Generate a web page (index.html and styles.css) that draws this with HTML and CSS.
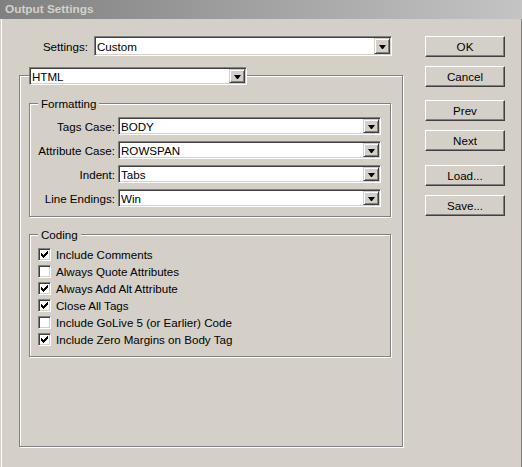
FILE: index.html
```html
<!DOCTYPE html>
<html>
<head>
<meta charset="utf-8">
<title>Output Settings</title>
<link rel="stylesheet" href="styles.css">
</head>
<body>
<div class="window">
  <div class="titlebar">Output Settings</div>
  <div class="content">
    <div class="main">
      <div class="settings-row">
        <span class="settings-label">Settings:</span>
        <div class="select select-settings"><span class="value">Custom</span><span class="drop"></span></div>
      </div>
      <div class="group outer">
        <div class="group-head">
          <div class="select select-html"><span class="value">HTML</span><span class="drop"></span></div>
        </div>
        <div class="group inner formatting">
          <div class="legend">Formatting</div>
          <div class="form-grid">
            <span class="field-label">Tags Case:</span>
            <div class="select"><span class="value">BODY</span><span class="drop"></span></div>
            <span class="field-label">Attribute Case:</span>
            <div class="select"><span class="value">ROWSPAN</span><span class="drop"></span></div>
            <span class="field-label">Indent:</span>
            <div class="select"><span class="value">Tabs</span><span class="drop"></span></div>
            <span class="field-label">Line Endings:</span>
            <div class="select"><span class="value">Win</span><span class="drop"></span></div>
          </div>
        </div>
        <div class="group inner coding">
          <div class="legend">Coding</div>
          <div class="check-list">
            <div class="check-row"><span class="checkbox"><svg viewBox="0 0 7 7" width="7" height="7"><path d="M6 0h1v1h-1zM5 1h2v1h-2zM0 2h1v1h-1zM4 2h3v1h-3zM0 3h2v1h-2zM3 3h3v1h-3zM0 4h5v1h-5zM1 5h3v1h-3zM2 6h1v1h-1z"/></svg></span><span>Include Comments</span></div>
            <div class="check-row"><span class="checkbox"></span><span>Always Quote Attributes</span></div>
            <div class="check-row"><span class="checkbox"><svg viewBox="0 0 7 7" width="7" height="7"><path d="M6 0h1v1h-1zM5 1h2v1h-2zM0 2h1v1h-1zM4 2h3v1h-3zM0 3h2v1h-2zM3 3h3v1h-3zM0 4h5v1h-5zM1 5h3v1h-3zM2 6h1v1h-1z"/></svg></span><span>Always Add Alt Attribute</span></div>
            <div class="check-row"><span class="checkbox"><svg viewBox="0 0 7 7" width="7" height="7"><path d="M6 0h1v1h-1zM5 1h2v1h-2zM0 2h1v1h-1zM4 2h3v1h-3zM0 3h2v1h-2zM3 3h3v1h-3zM0 4h5v1h-5zM1 5h3v1h-3zM2 6h1v1h-1z"/></svg></span><span>Close All Tags</span></div>
            <div class="check-row"><span class="checkbox"></span><span>Include GoLive 5 (or Earlier) Code</span></div>
            <div class="check-row"><span class="checkbox"><svg viewBox="0 0 7 7" width="7" height="7"><path d="M6 0h1v1h-1zM5 1h2v1h-2zM0 2h1v1h-1zM4 2h3v1h-3zM0 3h2v1h-2zM3 3h3v1h-3zM0 4h5v1h-5zM1 5h3v1h-3zM2 6h1v1h-1z"/></svg></span><span>Include Zero Margins on Body Tag</span></div>
          </div>
        </div>
      </div>
    </div>
    <div class="buttons">
      <div class="button b-ok">OK</div>
      <div class="button b-cancel">Cancel</div>
      <div class="button b-prev">Prev</div>
      <div class="button b-next">Next</div>
      <div class="button b-load">Load...</div>
      <div class="button b-save">Save...</div>
    </div>
  </div>
</div>
</body>
</html>
```

FILE: styles.css
```css
html, body {
  margin: 0;
  padding: 0;
}

body {
  width: 522px;
  height: 467px;
  overflow: hidden;
  background: #d4d0c8;
  font-family: "Liberation Sans", Arial, sans-serif;
  font-size: 11.6px;
  color: #000;
}

.window {
  width: 522px;
  height: 467px;
  box-sizing: border-box;
  background: #d4d0c8;
  box-shadow: inset 1px 0 #d4d0c8, inset 2px 0 #ffffff, inset -1px 0 #808080;
}

.titlebar {
  height: 19px;
  line-height: 19px;
  padding-left: 5px;
  background: linear-gradient(to right, #808080, #c4c4c4);
  color: #d4d0c8;
  font-weight: bold;
  font-size: 11.8px;
}

.content {
  display: flex;
  padding: 17px 0 0 19px;
}

.main {
  width: 384px;
  display: flex;
  flex-direction: column;
}

.settings-row {
  display: flex;
  align-items: center;
  height: 20px;
}

.settings-label {
  width: 69px;
  margin-right: 6px;
  text-align: right;
}

.select {
  box-sizing: border-box;
  height: 18px;
  padding: 1px 1px 1px 2px;
  background: #fff;
  border: 1px solid;
  border-color: #808080 #fff #fff #808080;
  box-shadow: inset 1px 1px #404040, inset -1px -1px #d4d0c8;
  display: flex;
  align-items: stretch;
}

.select .value {
  flex: 1;
  display: flex;
  align-items: center;
  white-space: nowrap;
}

.select .drop {
  box-sizing: border-box;
  width: 16px;
  background: #d4d0c8;
  border: 1px solid;
  border-color: #d4d0c8 #404040 #404040 #d4d0c8;
  box-shadow: inset 1px 1px #fff, inset -1px -1px #808080;
  display: flex;
  align-items: center;
  justify-content: center;
}

.select .drop::after {
  content: "";
  width: 1px;
  height: 0;
  border-left: 3px solid transparent;
  border-right: 3px solid transparent;
  border-top: 4px solid #000;
  margin-top: 1px;
}

.select-settings {
  width: 298px;
  height: 20px;
}

.select-html {
  width: 218px;
}

.group {
  box-sizing: border-box;
  border: 1px solid #808080;
  box-shadow: inset 1px 1px #fff, 1px 1px #fff;
  display: flex;
  flex-direction: column;
}

.outer {
  margin-top: 19px;
  height: 372px;
  padding: 0 11px 0 9px;
}

.group-head {
  margin-top: -9px;
  display: flex;
}

.inner {
  width: 362px;
}

.formatting {
  margin-top: 18px;
  padding-bottom: 9px;
}

.coding {
  margin-top: 17px;
  padding-bottom: 8px;
}

.legend {
  align-self: flex-start;
  margin: -7px 0 0 8px;
  padding: 0 3px;
  line-height: 13px;
  background: #d4d0c8;
}

.form-grid {
  margin-top: 7px;
  display: grid;
  grid-template-columns: 85px 263px;
  column-gap: 3px;
  row-gap: 6px;
  align-items: center;
}

.field-label {
  text-align: right;
  white-space: nowrap;
}

.check-list {
  margin-top: 5px;
  display: flex;
  flex-direction: column;
}

.check-row {
  height: 17px;
  display: flex;
  align-items: center;
  white-space: nowrap;
}

.checkbox {
  box-sizing: border-box;
  width: 13px;
  height: 13px;
  margin: 0 5px 0 8px;
  padding: 2px;
  background: #fff;
  border: 1px solid;
  border-color: #808080 #fff #fff #808080;
  box-shadow: inset 1px 1px #404040, inset -1px -1px #d4d0c8;
  display: flex;
}

.checkbox svg {
  display: block;
  shape-rendering: crispEdges;
  fill: #000;
}

.buttons {
  margin-left: 22px;
  display: flex;
  flex-direction: column;
}

.button {
  box-sizing: border-box;
  width: 80px;
  height: 21px;
  background: #d4d0c8;
  border: 1px solid;
  border-color: #fff #404040 #404040 #fff;
  box-shadow: inset -1px -1px #808080;
  display: flex;
  align-items: center;
  justify-content: center;
}

.b-ok { margin-bottom: 9px; }
.b-cancel { margin-bottom: 13px; }
.b-prev { margin-bottom: 9px; }
.b-next { margin-bottom: 14px; }
.b-load { margin-bottom: 9px; }
```
